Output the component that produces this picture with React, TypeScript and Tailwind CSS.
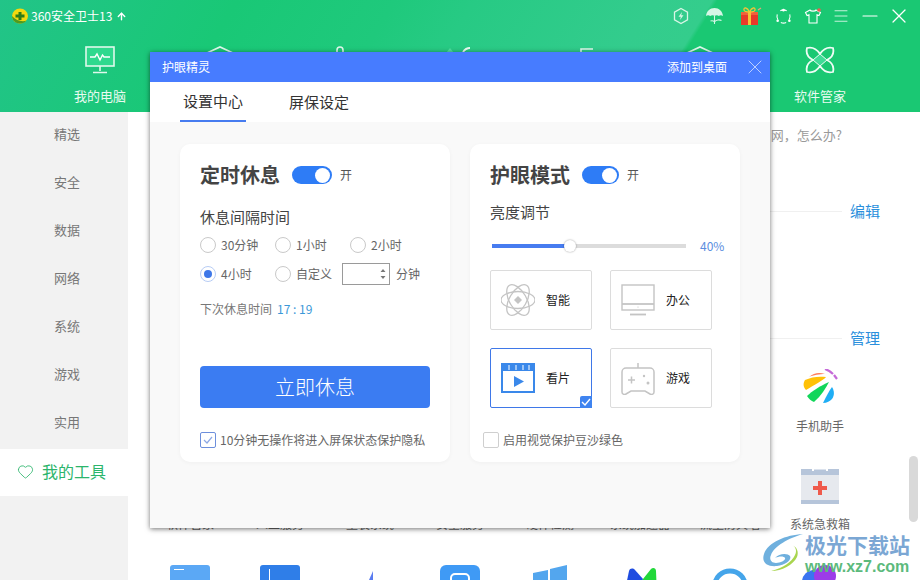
import type { ReactNode } from "react";
import { X, Minus, Menu, ArrowUp, Heart } from "lucide-react";

const sideItems = ["安全", "数据", "网络", "系统", "游戏", "实用"];

const Logo360 = () => (
  <svg width="18" height="16" viewBox="0 0 18 16">
    <ellipse cx="9" cy="8" rx="8" ry="7.500" fill="#f3d90f" />
    <path d="M1 8c0 4 3.500 7.500 8 7.500 3 0 5-1 6.500-3C12 14 5 13 1 8z" fill="#4f9a1f" />
    <path d="M7.500 4h3v2.500h3v3h-3V12h-3V9.500h-3v-3h3z" fill="#2f7d17" />
  </svg>
);

const TopIcons = () => (
  <div className="flex items-center">
    <svg width="18" height="18" viewBox="0 0 18 18" fill="none" stroke="#d8f5e6" strokeWidth="1.300" className="mr-[15px]">
      <path d="M9 1.500l6.500 3.700v7.600L9 16.500l-6.500-3.700V5.200z" />
      <path d="M10 5L6.500 9.700h2.300L8 13l3.500-4.700H9.200z" fill="#d8f5e6" stroke="none" />
    </svg>
    <svg width="20" height="18" viewBox="0 0 20 18" className="mr-[14px]">
      <path d="M1 9C1.500 4 5 1 9.500 1S17.500 4 18 9c-1.300-1-3-1-4.200 0-1-1-3-1-4.300 0-1-1-3-1-4.300 0-1.200-1-3-1-4.200 0z" fill="#d6f6e6" />
      <path d="M9.500 9v8M9.500 15c1.500-2.500 5-2.500 7-1.500M9.500 15c-1-1.300-2.500-1.500-4-1" stroke="#d6f6e6" strokeWidth="1.100" fill="none" />
    </svg>
    <svg width="24" height="20" viewBox="0 0 24 20" className="mr-[12px]">
      <rect x="2" y="6" width="17" height="13" fill="#e83a2a" />
      <rect x="2" y="6" width="17" height="3" fill="#f0623a" />
      <rect x="9" y="6" width="3" height="13" fill="#f3c437" />
      <path d="M10.500 6C8 1 4.500 1 5 4c.2 1.500 3 2 5.500 2zm0 0C13 1 16.500 1 16 4c-.2 1.500-3 2-5.500 2z" fill="none" stroke="#f3c437" strokeWidth="1.300" />
      <path d="M19 4l3-2" stroke="#e9a27c" strokeWidth="1.300" />
    </svg>
    <svg width="17" height="17" viewBox="0 0 16 16" fill="none" stroke="#fff" strokeWidth="1" className="mr-[12px]">
      <path d="M5 2.600A6.200 6.200 0 0 1 11 2.600M13.900 6a6.200 6.200 0 0 1-.6 5M10.500 13.700a6.200 6.200 0 0 1-5 0M2.700 11A6.200 6.200 0 0 1 2.100 6" />
      <circle cx="8" cy="2" r="1.200" fill="#fff" stroke="none" />
      <circle cx="2.500" cy="12" r="1.200" fill="#fff" stroke="none" />
      <circle cx="13.500" cy="12" r="1.200" fill="#fff" stroke="none" />
    </svg>
    <svg width="18" height="16" viewBox="0 0 18 16" fill="none" stroke="#fff" strokeWidth="1.100" className="mr-[10px]">
      <path d="M6 2L1.500 4.500l1.500 3 2-.8V15h8V6.700l2 .8 1.500-3L12 2c-.5 1.500-5.500 1.500-6 0z" />
      <circle cx="15" cy="2" r="1.800" fill="#ee5a52" stroke="none" />
    </svg>
    <Menu size={18} color="#fff" strokeWidth={1} className="mr-[8px]" />
    <Minus size={24} color="#fff" strokeWidth={1.100} className="mr-[5px]" />
    <X size={24} color="#fff" strokeWidth={1.200} />
  </div>
);

const navTips: ReactNode[] = [
  <svg key="pc" width="30" height="28" viewBox="0 0 30 28" fill="none" stroke="#dff8ec" strokeWidth="1.600">
    <rect x="1" y="1" width="28" height="19" fill="#2fd98e" />
    <path d="M5 11h5l2-3 3 6 2.500-5 1.500 2h6" stroke="#fff" strokeWidth="1.400" />
    <path d="M15 20v5M8 26.500h14" />
  </svg>,
  <svg key="a" width="30" height="28" viewBox="0 0 30 28" fill="none" stroke="#dff8ec" strokeWidth="1.600">
    <path d="M2 7L15 1l13 6v14H2z" />
  </svg>,
  <svg key="b" width="30" height="28" viewBox="0 0 30 28" fill="none" stroke="#dff8ec" strokeWidth="1.600">
    <rect x="12" y="1" width="6" height="14" rx="3" />
  </svg>,
  <svg key="c" width="30" height="28" viewBox="0 0 30 28" fill="none">
    <path d="M5 2l4 5H1z" fill="#50e0a0" />
    <path d="M18 6c2-3 4-4 7-4" stroke="#e9fbf2" strokeWidth="1.800" />
  </svg>,
  <svg key="d" width="30" height="28" viewBox="0 0 30 28" fill="none" stroke="#dff8ec" strokeWidth="1.600">
    <path d="M28 3H16V18" />
  </svg>,
  <svg key="e" width="30" height="28" viewBox="0 0 30 28" fill="none" stroke="#dff8ec" strokeWidth="1.600">
    <path d="M2 7L15 1l13 6v14H2z" />
  </svg>,
  <svg key="f" width="30" height="28" viewBox="0 0 30 28" fill="none" stroke="#eefcf5" strokeWidth="1.800">
    <path d="M2 2C6 1 11 2 15 8C19 2 24 1 28 2C29 6 28 11 22 14C28 17 29 22 28 26C24 27 19 26 15 20C11 26 6 27 2 26C1 22 2 17 8 14C2 11 1 6 2 2z" />
    <path d="M15 8l7 6-7 6-7-6z" fill="#3fdc97" strokeWidth="1" />
  </svg>,
];

const navLabels = ["我的电脑", "", "", "", "", "", "软件管家"];

const Toggle = ({ wide }: { wide?: boolean }) => (
  <div className={`flex h-[18px] items-center justify-end rounded-full bg-[#2e7cf6] pr-[2px] ${wide ? "w-[40px]" : "w-[37px]"}`}>
    <div className="h-[15px] w-[15px] rounded-full bg-white" />
  </div>
);

const Radio = ({ label, checked, className }: { label: string; checked?: boolean; className: string }) => (
  <div className={`flex items-center ${className}`}>
    <div className={`flex h-[16px] w-[16px] items-center justify-center rounded-full border ${checked ? "border-[#b8cdf5]" : "border-[#c9c9c9]"}`}>
      {checked && <div className="h-[8px] w-[8px] rounded-full bg-[#3f78e8]" />}
    </div>
    <span className="ml-[5px] text-[12px] leading-[16px] text-[#666]">{label}</span>
  </div>
);

const ModeBox = ({ icon, label, active, className }: { icon: ReactNode; label: string; active?: boolean; className?: string }) => (
  <div className={`relative flex h-[60px] w-[102px] items-center rounded-[2px] border pl-[10px] ${active ? "border-[#3f78e8]" : "border-[#dcdcdc]"} ${className ?? ""}`}>
    {icon}
    <span className="ml-[11px] text-[12px] leading-[16px] text-[#222]">{label}</span>
    {active && (
      <div className="absolute -bottom-px -right-px flex h-[12px] w-[12px] items-center justify-center rounded-tl-[2px] bg-[#3f84f0]">
        <svg width="10" height="8" viewBox="0 0 10 8" fill="none" stroke="#fff" strokeWidth="1.400">
          <path d="M1 4l3 3 5-6" />
        </svg>
      </div>
    )}
  </div>
);

const AtomIcon = () => (
  <svg width="34" height="36" viewBox="0 0 34 36" fill="none" stroke="#c4c4c4" strokeWidth="1.300">
    <ellipse cx="17" cy="18" rx="17" ry="8.500" />
    <ellipse cx="17" cy="18" rx="17" ry="8.500" transform="rotate(60 17 18)" />
    <ellipse cx="17" cy="18" rx="17" ry="8.500" transform="rotate(120 17 18)" />
    <path d="M17 14l4 4-4 4-4-4z" fill="#c4c4c4" stroke="none" />
  </svg>
);

const DeskIcon = () => (
  <svg width="34" height="32" viewBox="0 0 34 32" fill="none" stroke="#c4c4c4" strokeWidth="1.400">
    <rect x="1" y="1" width="32" height="25" />
    <path d="M1 20h32" strokeWidth="1.800" />
    <path d="M9 30.500h16" strokeWidth="1.800" />
    <circle cx="17" cy="23" r="0.600" fill="#c4c4c4" stroke="none" />
  </svg>
);

const FilmIcon = () => (
  <svg width="34" height="30" viewBox="0 0 34 30" fill="none">
    <rect x="1" y="1" width="32" height="28" stroke="#3a88ea" strokeWidth="2" />
    <rect x="1" y="1" width="32" height="7" fill="#3a88ea" />
    <path d="M8 2v5M15 2v5M22 2v5M28 2v5" stroke="#bcd8fa" strokeWidth="1.500" />
    <path d="M13 13l10 5.500L13 24z" fill="#3a88ea" />
  </svg>
);

const PadIcon = () => (
  <svg width="34" height="33" viewBox="0 0 34 33" fill="none" stroke="#c4c4c4" strokeWidth="1.500">
    <path d="M17 1v5M5 6h24a4 4 0 0 1 4 4v20c0 2-2 3-4 2l-5-3H10l-5 3c-2 1-4 0-4-2V10a4 4 0 0 1 4-4z" />
    <path d="M7 18h7M10.500 14.500v7" />
    <circle cx="23" cy="14" r="1.200" fill="#c4c4c4" stroke="none" />
    <circle cx="27" cy="21" r="1.500" fill="#c4c4c4" stroke="none" />
  </svg>
);

const Modal = () => (
  <div className="absolute left-[150px] top-[52px] flex h-[476px] w-[620px] flex-col bg-[#f9f9f9] shadow-[0_1px_5px_rgba(0,0,0,0.55)]">
    <div className="flex h-[30px] items-center bg-[#477cff] pl-[12px] pr-[3px] text-[12px] leading-[16px] text-white">
      <span>护眼精灵</span>
      <span className="ml-auto">添加到桌面</span>
      <X size={24} strokeWidth={0.8} color="#dbe6ff" className="ml-[16px]" />
    </div>
    <div className="flex h-[40px] bg-white pl-[30px] text-[15px] text-[#333]">
      <div className="flex h-[40px] w-[66px] items-center justify-center border-b-2 border-[#477cf0]">设置中心</div>
      <div className="ml-[43px] flex h-[40px] items-center">屏保设定</div>
    </div>
    <div className="flex gap-[20px] px-[30px] pt-[22px]">
      <div className="flex h-[318px] w-[270px] flex-col rounded-[10px] bg-white pl-[20px] shadow-[0_1px_4px_rgba(0,0,0,0.04)]">
        <div className="mt-[19px] flex h-[24px] items-center">
          <span className="text-[20px] font-bold leading-[24px] text-[#444]">定时休息</span>
          <div className="ml-[12px]"><Toggle wide /></div>
          <span className="ml-[8px] text-[12px] leading-[16px] text-[#555]">开</span>
        </div>
        <div className="mt-[20px] text-[15px] leading-[20px] text-[#444]">休息间隔时间</div>
        <div className="mt-[10px] flex h-[16px]">
          <Radio label="30分钟" className="w-[75px]" />
          <Radio label="1小时" className="w-[75px]" />
          <Radio label="2小时" className="w-[75px]" />
        </div>
        <div className="mt-[10px] flex h-[22px] items-center">
          <Radio label="4小时" checked className="w-[75px]" />
          <Radio label="自定义" className="w-[67px]" />
          <div className="flex h-[22px] w-[48px] flex-col items-end justify-center border border-[#9a9a9a] pr-[3px]">
            <svg width="6" height="12" viewBox="0 0 6 12" fill="#777">
              <path d="M3 1l2.500 3h-5zM3 11L.5 8h5z" />
            </svg>
          </div>
          <span className="ml-[6px] text-[12px] leading-[16px] text-[#666]">分钟</span>
        </div>
        <div className="mt-[16px] flex h-[16px] text-[12px] leading-[16px] text-[#777]">
          <span>下次休息时间</span>
          <span className="ml-[5px] text-[#3b98d8]">17 : 19</span>
        </div>
        <button type="button" className="mt-[49px] h-[42px] w-[230px] rounded-[4px] bg-[#3b7cf2] text-[20px] font-light text-white">立即休息</button>
        <div className="mt-[24px] flex items-center">
          <div className="flex h-[16px] w-[16px] items-center justify-center rounded-[2px] border border-[#6d8fdc]">
            <svg width="10" height="8" viewBox="0 0 10 8" fill="none" stroke="#8da8e4" strokeWidth="1.200">
              <path d="M1 4l3 3 5-6" />
            </svg>
          </div>
          <span className="ml-[4px] text-[12px] leading-[16px] text-[#666]">10分钟无操作将进入屏保状态保护隐私</span>
        </div>
      </div>
      <div className="flex h-[318px] w-[270px] flex-col rounded-[10px] bg-white pl-[20px] shadow-[0_1px_4px_rgba(0,0,0,0.04)]">
        <div className="mt-[19px] flex h-[24px] items-center">
          <span className="text-[20px] font-bold leading-[24px] text-[#444]">护眼模式</span>
          <div className="ml-[12px]"><Toggle /></div>
          <span className="ml-[8px] text-[12px] leading-[16px] text-[#555]">开</span>
        </div>
        <div className="mt-[15px] text-[15px] leading-[20px] text-[#444]">亮度调节</div>
        <div className="mt-[14px] flex h-[20px] items-center">
          <div className="relative ml-[2px] h-[4px] w-[194px] bg-[#dcdcdc]">
            <div className="h-[4px] w-[78px] bg-[#477cf0]" />
            <div className="absolute left-[72px] top-[-4px] h-[12px] w-[12px] rounded-full bg-white shadow-[0_0_2px_rgba(0,0,0,0.4)]" />
          </div>
          <span className="ml-[14px] text-[12px] leading-[16px] text-[#5b8ee0]">40%</span>
        </div>
        <div className="mt-[14px] flex gap-[18px]">
          <ModeBox icon={<AtomIcon />} label="智能" />
          <ModeBox icon={<DeskIcon />} label="办公" />
        </div>
        <div className="mt-[18px] flex gap-[18px]">
          <ModeBox icon={<FilmIcon />} label="看片" active />
          <ModeBox icon={<PadIcon />} label="游戏" />
        </div>
        <div className="mt-[24px] ml-[-7px] flex items-center">
          <div className="h-[16px] w-[16px] rounded-[2px] border border-[#cfcfcf]" />
          <span className="ml-[4px] text-[12px] leading-[16px] text-[#666]">启用视觉保护豆沙绿色</span>
        </div>
      </div>
    </div>
  </div>
);

const Watermark = () => (
  <div className="absolute bottom-[4px] left-[762px] flex items-start">
    <svg width="42" height="42" viewBox="0 0 42 42" fill="none">
      <path d="M41 1C24 2 6 9 2 21c-3 9 4 13 13 12 9-1 15-6 13-10-2-3-11-3-15 2 4-2 9-2 10 0 1 2-4 5-9 5-5 0-7-4-5-8C12 13 27 5 41 1z" fill="#6fb0de" />
      <path d="M30 12c4 2 5 6 3 10-3 7-12 13-24 16 11 0 22-6 26-14 2-5 0-10-5-12z" fill="#a9d54f" />
    </svg>
    <div className="ml-px flex flex-col items-start">
      <span className="text-[21px] font-bold leading-[22px] text-[#7ba7d4]">极光下载站</span>
      <span className="mt-[3px] font-['Liberation_Sans',sans-serif] text-[16px] font-bold leading-[18px] text-[#5cba7c]">www.xz7.com</span>
    </div>
  </div>
);

const bottomLabels = ["软件管家", "人工服务", "重装系统", "安全服务", "硬件检测", "系统加速器", "流量防火墙", "系统急救箱"];

const BottomIcons = () => (
  <div className="mt-[33px] grid w-[720px] grid-cols-8 justify-items-center">
    <div className="h-[30px] w-[40px] rounded-[3px] bg-[#5ba8f5]">
      <div className="ml-[4px] mt-[4px] h-[1px] w-[10px] bg-white" />
    </div>
    <div className="h-[30px] w-[40px] rounded-[3px] bg-[#2f7ee8]">
      <div className="ml-[9px] mt-[4px] h-[12px] w-[1px] bg-white" />
    </div>
    <svg width="40" height="30" viewBox="0 0 40 30"><path d="M23 6l-4 9h4z" fill="#5a7cf0" /></svg>
    <div className="h-[30px] w-[40px] rounded-[6px] bg-[#3f9af5]">
      <div className="ml-[10px] mt-[8px] h-[20px] w-[20px] rounded-[5px] border-2 border-white" />
    </div>
    <svg width="38" height="30" viewBox="0 0 38 30"><path d="M2 8l15-3v10H2zM19 4l17-4v15H19zM2 17h15v13H2zM19 17h17v13H19z" fill="#53a6ee" /></svg>
    <svg width="38" height="30" viewBox="0 0 38 30"><path d="M3 30L8 6c1-3 4-3 6-1l8 9-6 16z" fill="#1f4ce0" /><path d="M16 30l6-16L30 4c2-2 5-1 5 2l1 24z" fill="#22d83a" /></svg>
    <svg width="38" height="30" viewBox="0 0 38 30" fill="none"><ellipse cx="19" cy="20" rx="15" ry="14" stroke="#45a5ea" strokeWidth="5" /></svg>
    <svg width="38" height="30" viewBox="0 0 38 30"><circle cx="13" cy="17" r="12" fill="#3b74f0" /><circle cx="24" cy="11" r="11" fill="#9c3ce8" /><circle cx="30" cy="24" r="9" fill="#e0281e" /></svg>
  </div>
);

export default function App() {
  return (
    <div className="relative h-[580px] w-[920px] overflow-hidden bg-white font-['Noto_Sans_CJK_SC','Noto_Sans',sans-serif]">
      <header className="h-[112px] bg-[linear-gradient(122deg,#22c488_0%,#19c876_24%,#1fc97c_40%,#27ca84_48%,#33cc8d_66%,#34cd8c_72%,#1ac873_72.500%,#1ac873_100%)]">
        <div className="flex h-[32px] items-center pl-[11px] pr-[9px]">
          <Logo360 />
          <span className="ml-[2px] text-[12px] leading-[16px] text-white">360安全卫士13</span>
          <ArrowUp size={11} color="#fff" strokeWidth={3} className="ml-[4px]" />
          <div className="ml-auto"><TopIcons /></div>
        </div>
        <div className="mt-[14px] flex pl-[40px]">
          {navTips.map((icon, i) => (
            <div key={i} className="flex h-[66px] w-[120px] flex-col items-center">
              {icon}
              <span className="mt-[14px] text-[13px] leading-[16px] text-[#e8fbf1]">{navLabels[i]}</span>
            </div>
          ))}
        </div>
      </header>
      <div className="flex h-[468px]">
        <aside className="flex w-[128px] flex-col bg-[#f2f2f2]">
          <div className="mb-[2px] flex h-[44px] shrink-0 items-center pl-[54px] text-[13px] text-[#777]">精选</div>
          {sideItems.map((s) => (
            <div key={s} className="flex h-[48px] shrink-0 items-center pl-[54px] text-[13px] text-[#777]">{s}</div>
          ))}
          <div className="mt-[3px] flex h-[47px] items-center bg-white pb-[3px] pl-[17px] text-[16px] text-[#2cb56c]">
            <Heart size={17} strokeWidth={1.200} className="mr-[8px] text-[#2cb56c]" />
            我的工具
          </div>
        </aside>
        <main className="flex-1 pl-[17px]">
          <div className="mt-[15px] pr-[78px] text-right text-[13px] leading-[16px] text-[#999]">网，怎么办?</div>
          <div className="mt-[58px] flex items-center pr-[40px]">
            <div className="ml-[40px] h-px flex-1 bg-[#f0f0f0]" />
            <span className="ml-[8px] text-[15px] leading-[20px] text-[#2a8fdc]">编辑</span>
          </div>
          <div className="mt-[107px] flex items-center pr-[40px]">
            <div className="ml-[40px] h-px flex-1 bg-[#f0f0f0]" />
            <span className="ml-[8px] text-[15px] leading-[20px] text-[#2a8fdc]">管理</span>
          </div>
          <div className="mt-[21px] flex w-[720px] justify-end">
            <div className="flex w-[90px] flex-col items-center">
              <svg width="38" height="38" viewBox="0 0 38 38">
                <path d="M8 8a16 16 0 0 1 16-3c-5 0-12 1-16 3z" fill="#ff7d5a" />
                <path d="M5 8c6-3 14-4 21-3-2 3-12 8-20 13-3-3-3-7-1-10z" fill="#ffc107" transform="translate(-1 3)" />
                <path d="M6 27c5-5 13-10 22-14-3 6-8 14-15 20-3-1-5-3-7-6z" fill="#12d65a" />
                <path d="M22 34c3-6 6-12 9-16 2 3 3 8 0 12-2 2-5 4-9 4z" fill="#20aef5" />
                <path d="M24 0c3 1 6 3 8 5M33 6l3 4" stroke="#c56ad8" strokeWidth="2.200" fill="none" />
              </svg>
              <span className="mt-[11px] text-[12px] leading-[16px] text-[#666]">手机助手</span>
            </div>
          </div>
          <div className="mt-[34px] flex h-[38px] w-[720px] justify-end">
            <div className="flex w-[90px] justify-center">
              <svg width="38" height="38" viewBox="0 0 38 38">
                <path d="M0 1h38v6H0zM0 32h38v4H0z" fill="#b6c5da" />
                <rect y="7" width="38" height="25" fill="#e6e9ee" />
                <path d="M11 0h16v3h-2V1.500H13V3h-2z" fill="#fff" />
                <path d="M17 13h4v5h5v4h-5v5h-4v-5h-5v-4h5z" fill="#ef5a4c" />
              </svg>
            </div>
          </div>
          <div className="mt-[10px] grid w-[720px] grid-cols-8 justify-items-center">
            {bottomLabels.map((s) => (
              <span key={s} className="text-[12px] leading-[16px] text-[#666]">{s}</span>
            ))}
          </div>
          <BottomIcons />
        </main>
      </div>
      <Modal />
      <div className="absolute right-[2px] top-[456px] h-[66px] w-[9px] rounded-full bg-[#d9d9d9]" />
      <Watermark />
    </div>
  );
}
